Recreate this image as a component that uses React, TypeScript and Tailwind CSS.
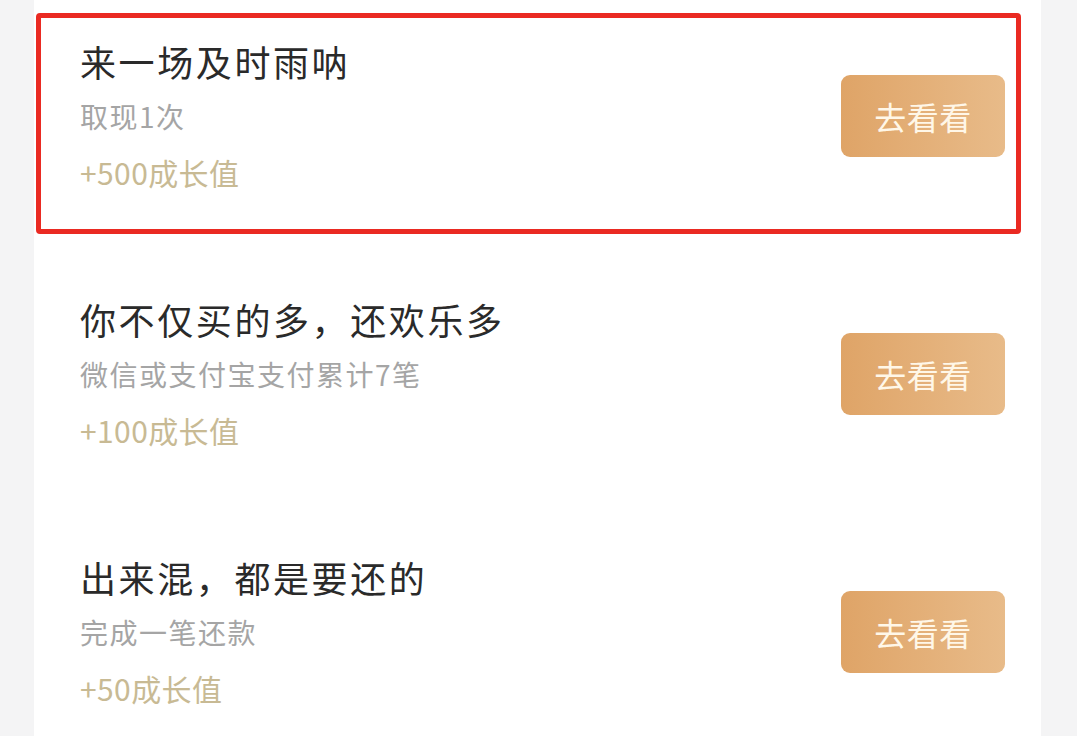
import React from "react";

const items = [
  { title: "来一场及时雨呐", sub: "取现1次", reward: "+500成长值", highlight: true },
  { title: "你不仅买的多，还欢乐多", sub: "微信或支付宝支付累计7笔", reward: "+100成长值", highlight: false },
  { title: "出来混，都是要还的", sub: "完成一笔还款", reward: "+50成长值", highlight: false },
];

export default function App() {
  return (
    <div
      className="w-[1077px] h-[736px] overflow-hidden bg-[#f4f4f5] flex"
      style={{ fontFamily: '"Noto Sans CJK SC", "Noto Sans", sans-serif' }}
    >
      <div className="ml-[34px] w-[1007px] h-full bg-white pt-[13px] flex flex-col gap-[37px]">
        {items.map((it, i) => (
          <div
            key={i}
            className={`ml-[2px] w-[985px] h-[221px] shrink-0 rounded-[4px] border-[5px] flex items-start justify-between ${
              it.highlight ? "border-[#ea2a22]" : "border-transparent"
            }`}
          >
            <div className="pl-[39px] pt-[21px] flex flex-col">
              <div className="h-[44px] leading-[44px] text-[36px] tracking-[2.6px] text-[#2a2a2a] whitespace-nowrap">
                {it.title}
              </div>
              <div className="mt-[13px] h-[40px] leading-[40px] text-[28px] tracking-[1.5px] text-[#a5a5a5] whitespace-nowrap">
                {it.sub}
              </div>
              <div className="mt-[16px] h-[40px] leading-[40px] text-[30px] tracking-[0.4px] text-[#c8ba94] whitespace-nowrap">
                {it.reward}
              </div>
            </div>
            <div className="mt-[57px] mr-[11px] w-[164px] h-[82px] rounded-[9px] bg-gradient-to-r from-[#dfa467] to-[#e8bb89] flex items-center justify-center text-[32px] tracking-[0.5px] text-[#fff7e8]">
              去看看
            </div>
          </div>
        ))}
      </div>
    </div>
  );
}
